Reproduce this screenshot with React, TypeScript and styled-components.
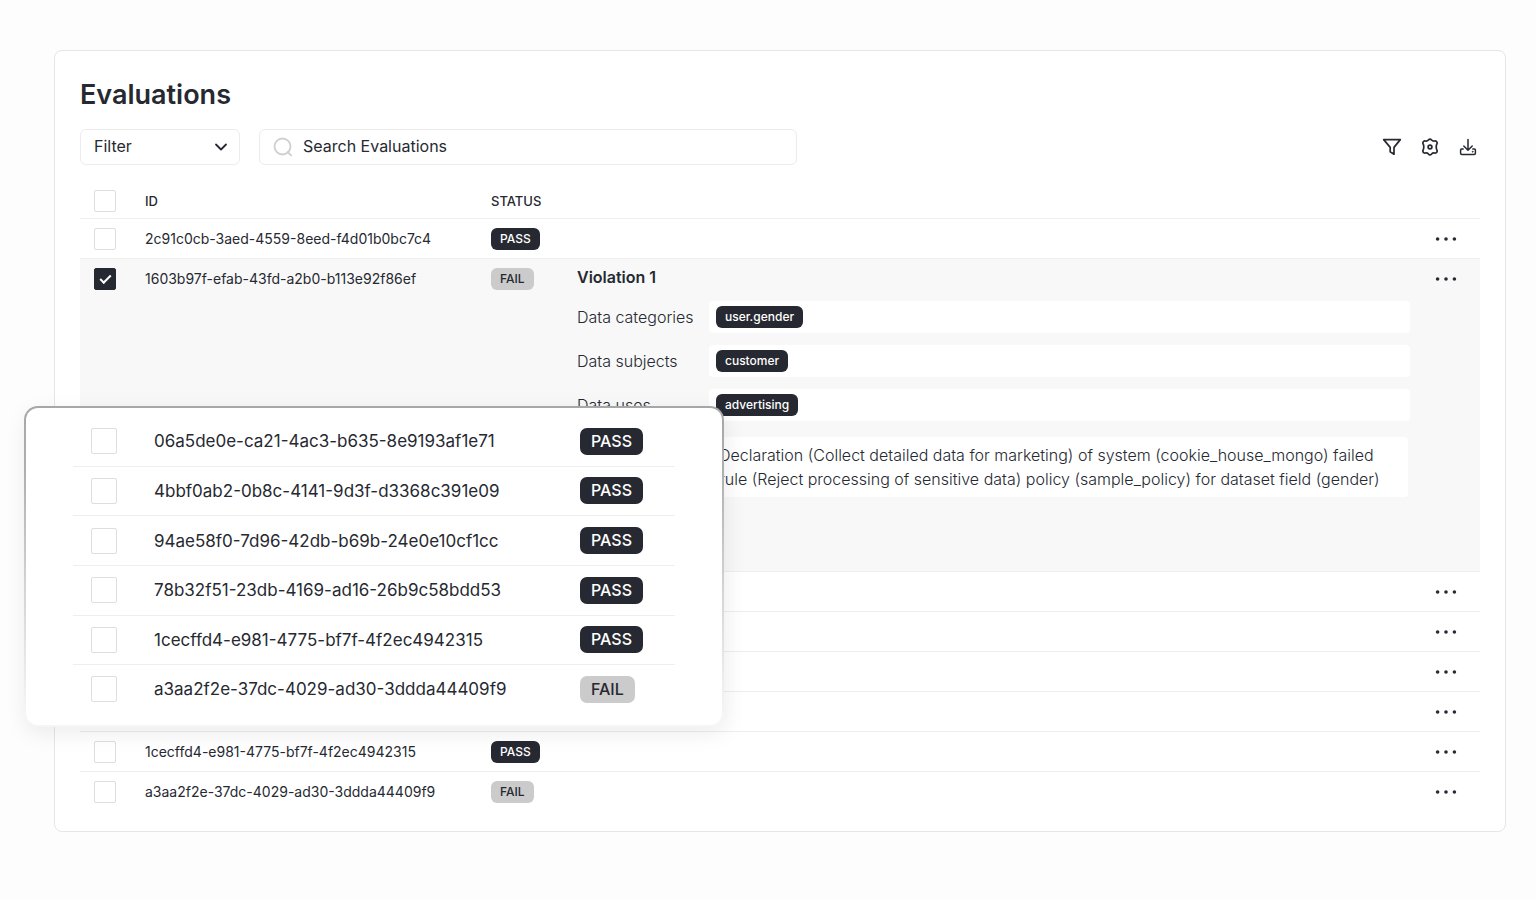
import React, { useState } from "react";
import styled, { createGlobalStyle, css } from "styled-components";

const ink = "#262931";
const line = "#eeeeee";

const GlobalStyle = createGlobalStyle`
  *, *::before, *::after { box-sizing: border-box; }
  body {
    margin: 0;
    background: #fdfdfd;
    color: ${ink};
    font-family: Inter, "Liberation Sans", sans-serif;
    font-size: 16px;
  }
  button, input, select { font: inherit; color: inherit; }
`;

const Page = styled.div`
  padding: 50px 30px 50px 54px;
`;

const Stage = styled.div`
  position: relative;
`;

const Panel = styled.main`
  padding: 26px 25px 19px;
  background: #fff;
  border: 1px solid #e6e6e6;
  border-radius: 8px;
`;

const Title = styled.h1`
  margin: 0 0 16px;
  font-size: 27px;
  line-height: 36px;
  font-weight: 600;
`;

const Toolbar = styled.div`
  display: flex;
  align-items: center;
  gap: 19px;
  margin-bottom: 19px;
`;

const fieldBox = css`
  height: 36px;
  border: 1px solid #ececec;
  border-radius: 6px;
  background: #fff;
`;

const FilterField = styled.div`
  display: grid;
  align-items: center;
  width: 160px;
  flex: none;
  > * { grid-area: 1 / 1; }
  > svg { justify-self: end; margin-right: 12px; pointer-events: none; }
`;

const FilterSelect = styled.select`
  ${fieldBox}
  width: 100%;
  padding: 0 13px 2px;
  appearance: none;
`;

const SearchField = styled.label`
  ${fieldBox}
  display: flex;
  align-items: center;
  gap: 10px;
  flex: 0 1 538px;
  padding: 0 13px;
`;

const SearchInput = styled.input`
  flex: 1;
  min-width: 0;
  padding: 0 0 2px;
  border: 0;
  outline: 0;
  background: transparent;
  &::placeholder { color: ${ink}; opacity: 1; }
`;

const ToolGroup = styled.div`
  display: flex;
  gap: 14px;
  margin-left: auto;
`;

const IconButton = styled.button`
  display: flex;
  align-items: center;
  justify-content: center;
  width: 24px;
  height: 24px;
  padding: 0;
  border: 0;
  background: transparent;
  cursor: pointer;
`;

const Table = styled.table`
  width: 100%;
  table-layout: fixed;
  border-collapse: separate;
  border-spacing: 0;
  font-size: 14px;
  font-weight: 400;
`;

const Col = styled.col<{ $w?: number }>`
  ${(p) => p.$w && `width: ${p.$w}px;`}
`;

const HeadRow = styled.tr`
  height: 35px;
  > * {
    padding: 0;
    border-bottom: 1px solid ${line};
    font-size: 13px;
    font-weight: 500;
    text-align: left;
  }
`;

const Row = styled.tr<{ $open?: boolean }>`
  height: ${(p) => (p.$open ? 313 : 40)}px;
  background: ${(p) => (p.$open ? "#f8f8f8" : "transparent")};
  > td {
    padding: ${(p) => (p.$open ? "9px 0 0" : "0")};
    border-bottom: 1px solid ${line};
    vertical-align: ${(p) => (p.$open ? "top" : "middle")};
    line-height: 22px;
  }
  &:last-child > td { border-bottom: 0; }
`;

const CheckLabel = styled.label<{ $large?: boolean }>`
  display: flex;
  padding-left: ${(p) => (p.$large ? 18 : 14)}px;
`;

const CheckBox = styled.input<{ $large?: boolean }>`
  appearance: none;
  display: grid;
  place-items: center;
  width: ${(p) => (p.$large ? 26 : 22)}px;
  height: ${(p) => (p.$large ? 26 : 22)}px;
  margin: 0;
  border: 1px solid #dedede;
  border-radius: 2px;
  background: #fff;
  &:checked { border-color: ${ink}; background: ${ink}; }
  &:checked::after {
    content: "";
    width: 11px;
    height: 6px;
    border: solid #fff;
    border-width: 0 0 2px 2px;
    transform: translateY(-1px) rotate(-45deg);
  }
`;

const Badge = styled.span<{ $muted?: boolean; $large?: boolean }>`
  display: block;
  width: fit-content;
  padding: 0 ${(p) => (p.$large ? 11 : 9)}px;
  border-radius: ${(p) => (p.$large ? 7 : 6)}px;
  background: ${(p) => (p.$muted ? "#cbcbcb" : ink)};
  color: ${(p) => (p.$muted ? ink : "#fff")};
  font-size: ${(p) => (p.$large ? 16 : 12)}px;
  line-height: ${(p) => (p.$large ? 27 : 22)}px;
  font-weight: 500;
`;

const MoreButton = styled(IconButton)`
  width: 28px;
  height: 22px;
  margin: 0 auto;
`;

const Violation = styled.section`
  padding-right: 2px;
  font-size: 16px;
  font-weight: 300;
`;

const ViolationTitle = styled.h2`
  margin: 0 0 15px;
  font-size: 16px;
  line-height: 18px;
  font-weight: 600;
`;

const Details = styled.dl`
  display: grid;
  grid-template-columns: 120px 1fr;
  gap: 12px;
  align-items: center;
  margin: 0;
`;

const Term = styled.dt`
  white-space: nowrap;
`;

const Value = styled.dd`
  display: flex;
  align-items: center;
  height: 32px;
  margin: 0;
  padding: 0 7px;
  border-radius: 4px;
  background: #fff;
`;

const Message = styled.dd`
  grid-column: 2;
  margin: 4px 2px 0;
  padding: 6px 8px;
  border-radius: 4px;
  background: #fff;
  line-height: 24px;
  white-space: pre-line;
`;

const Popup = styled.aside`
  position: absolute;
  top: 356px;
  left: -30px;
  width: 700px;
  padding: 9px 47px 12px;
  border: 2px solid transparent;
  border-radius: 14px;
  background:
    linear-gradient(#fff, #fff) padding-box,
    linear-gradient(#a6a7a9 0%, #adaeb0 20%, #d2d2d3 55%, #f5f5f5 95%) border-box;
  box-shadow: 2px 6px 22px rgba(0, 0, 0, 0.08);
`;

const PopupTable = styled(Table)`
  height: 296px;
  font-size: 17px;
`;

const PopupRow = styled.tr`
  > td { padding: 0; border-bottom: 1px solid ${line}; }
  &:last-child > td { border-bottom: 0; }
`;

const ChevronIcon = () => (
  <svg width="14" height="14" viewBox="0 0 14 14" fill="none" stroke={ink} strokeWidth="1.8" strokeLinecap="round" strokeLinejoin="round">
    <path d="M2 4.5 7 9.5 12 4.5" />
  </svg>
);

const SearchIcon = () => (
  <svg width="20" height="20" viewBox="0 0 20 20" fill="none" stroke="#cfcfcf" strokeWidth="1.8" strokeLinecap="round">
    <circle cx="9.5" cy="9.5" r="8" />
    <path d="M14.6 15 18.2 18.4" />
  </svg>
);

const FunnelIcon = () => (
  <svg width="20" height="20" viewBox="0 0 20 20" fill="none" stroke={ink} strokeWidth="1.7" strokeLinejoin="round">
    <path d="M1.7 2.6H18.3L12 10.4V17.2L8.2 14.8V10.4Z" />
  </svg>
);

const GearIcon = () => (
  <svg width="20" height="20" viewBox="0 0 20 20" fill="none" stroke={ink} strokeWidth="1.7" strokeLinejoin="round">
    <path d="M8.4 3Q10 1.2 11.6 3Q12.8 4.4 14.6 4Q16.9 3.7 17.2 6.2Q16.2 8 16.2 10Q16.2 12 17.2 13.8Q16.9 16.3 14.6 16Q12.8 15.6 11.6 17Q10 18.8 8.4 17Q7.2 15.6 5.4 16Q3.1 16.3 2.8 13.8Q3.8 12 3.8 10Q3.8 8 2.8 6.2Q3.1 3.7 5.4 4Q7.2 4.4 8.4 3Z" />
    <circle cx="10" cy="10" r="1.9" />
  </svg>
);

const DownloadIcon = () => (
  <svg width="20" height="20" viewBox="0 0 20 20" fill="none" stroke={ink} strokeWidth="1.5" strokeLinecap="round" strokeLinejoin="round">
    <path d="M10 2.6V12.8M5.8 9 10 13.2 14.2 9" />
    <path d="M5.2 12H3.6Q2.6 12 2.6 13.2V16.2Q2.6 17.4 3.8 17.4H16.2Q17.4 17.4 17.4 16.2V13.2Q17.4 12 16.4 12H14.8" />
    <circle cx="14.6" cy="14.7" r="0.5" fill={ink} strokeWidth="0.6" />
  </svg>
);

const DotsIcon = () => (
  <svg width="22" height="6" viewBox="0 0 22 6" fill={ink}>
    <circle cx="2.6" cy="3" r="1.8" />
    <circle cx="11" cy="3" r="1.8" />
    <circle cx="19.4" cy="3" r="1.8" />
  </svg>
);

type Status = "PASS" | "FAIL";
type Evaluation = { id: string; status: Status; open?: boolean; lifted?: boolean };

const recent: Evaluation[] = [
  { id: "06a5de0e-ca21-4ac3-b635-8e9193af1e71", status: "PASS", lifted: true },
  { id: "4bbf0ab2-0b8c-4141-9d3f-d3368c391e09", status: "PASS", lifted: true },
  { id: "94ae58f0-7d96-42db-b69b-24e0e10cf1cc", status: "PASS", lifted: true },
  { id: "78b32f51-23db-4169-ad16-26b9c58bdd53", status: "PASS", lifted: true },
  { id: "1cecffd4-e981-4775-bf7f-4f2ec4942315", status: "PASS" },
  { id: "a3aa2f2e-37dc-4029-ad30-3ddda44409f9", status: "FAIL" },
];

const evaluations: Evaluation[] = [
  { id: "2c91c0cb-3aed-4559-8eed-f4d01b0bc7c4", status: "PASS" },
  { id: "1603b97f-efab-43fd-a2b0-b113e92f86ef", status: "FAIL", open: true },
  ...recent,
];

const violationFields = [
  { label: "Data categories", tag: "user.gender" },
  { label: "Data subjects", tag: "customer" },
  { label: "Data uses", tag: "advertising" },
];

const violationMessage =
  "Declaration (Collect detailed data for marketing) of system (cookie_house_mongo) failed\nrule (Reject processing of sensitive data) policy (sample_policy) for dataset field (gender)";

function Check({ name, large, checked }: { name: string; large?: boolean; checked?: boolean }) {
  return (
    <CheckLabel $large={large}>
      <CheckBox type="checkbox" $large={large} defaultChecked={checked} aria-label={name} />
    </CheckLabel>
  );
}

function ViolationDetails() {
  return (
    <Violation>
      <ViolationTitle>Violation 1</ViolationTitle>
      <Details>
        {violationFields.map((f) => (
          <React.Fragment key={f.label}>
            <Term>{f.label}</Term>
            <Value>
              <Badge>{f.tag}</Badge>
            </Value>
          </React.Fragment>
        ))}
        <Message>{violationMessage}</Message>
      </Details>
    </Violation>
  );
}

/* Rows lifted into the popup card keep only their line and menu in the table. */
function EvaluationRow({ id, status, open, lifted }: Evaluation) {
  return (
    <Row $open={open}>
      <td>{!lifted && <Check name={`Select ${id}`} checked={open} />}</td>
      <td>{!lifted && id}</td>
      <td>{!lifted && <Badge $muted={status === "FAIL"}>{status}</Badge>}</td>
      <td>{open && <ViolationDetails />}</td>
      <td><MoreButton aria-label="More actions"><DotsIcon /></MoreButton></td>
    </Row>
  );
}

export default function App() {
  const [query, setQuery] = useState("");
  return (
    <>
      <GlobalStyle />
      <Page>
        <Stage>
          <Panel>
            <Title>Evaluations</Title>
            <Toolbar>
              <FilterField>
                <FilterSelect aria-label="Filter">
                  <option>Filter</option>
                </FilterSelect>
                <ChevronIcon />
              </FilterField>
              <SearchField>
                <SearchIcon />
                <SearchInput
                  aria-label="Search Evaluations"
                  placeholder="Search Evaluations"
                  value={query}
                  onChange={(e) => setQuery(e.target.value)}
                />
              </SearchField>
              <ToolGroup>
                <IconButton aria-label="Filter rows"><FunnelIcon /></IconButton>
                <IconButton aria-label="Settings"><GearIcon /></IconButton>
                <IconButton aria-label="Download"><DownloadIcon /></IconButton>
              </ToolGroup>
            </Toolbar>
            <Table>
              <colgroup>
                <Col $w={65} />
                <Col $w={346} />
                <Col $w={86} />
                <Col />
                <Col $w={68} />
              </colgroup>
              <thead>
                <HeadRow>
                  <td><Check name="Select all evaluations" /></td>
                  <th scope="col">ID</th>
                  <th scope="col">STATUS</th>
                  <td />
                  <td />
                </HeadRow>
              </thead>
              <tbody>
                {evaluations.map((e) => (
                  <EvaluationRow key={e.id} {...e} />
                ))}
              </tbody>
            </Table>
          </Panel>
          <Popup aria-label="Recent evaluations">
            <PopupTable>
              <colgroup>
                <Col $w={81} />
                <Col $w={426} />
                <Col />
              </colgroup>
              <tbody>
                {recent.map((e) => (
                  <PopupRow key={e.id}>
                    <td><Check large name={`Select ${e.id}`} /></td>
                    <td>{e.id}</td>
                    <td><Badge $large $muted={e.status === "FAIL"}>{e.status}</Badge></td>
                  </PopupRow>
                ))}
              </tbody>
            </PopupTable>
          </Popup>
        </Stage>
      </Page>
    </>
  );
}
